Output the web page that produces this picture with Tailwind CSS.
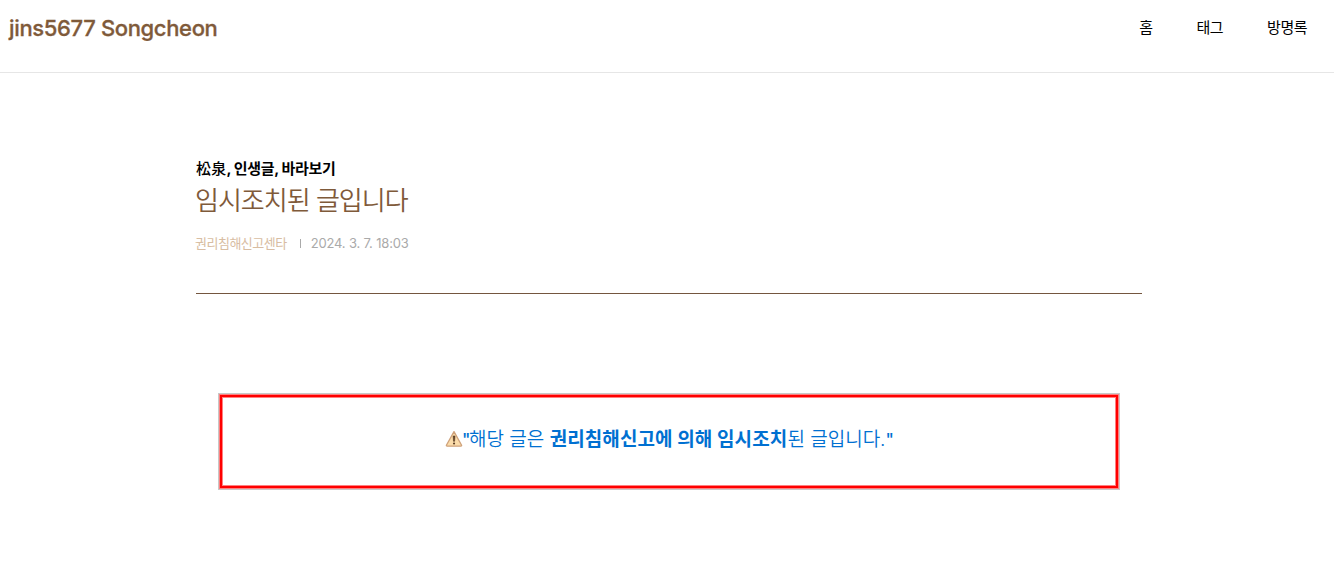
<!DOCTYPE html>
<html lang="ko">
<head>
    <meta charset="UTF-8">
    <title>jins5677 Songcheon</title>
    <script src="https://cdn.jsdelivr.net/npm/@tailwindcss/browser@4"></script>
</head>
<body class="min-h-screen bg-white font-[Inter,'Noto_Sans_CJK_KR',sans-serif] overflow-hidden">

<!-- Header -->
<header class="h-[73px] border-b border-[#e6e6e6] flex items-start justify-between pl-[9px] pr-[27px]">
    <h1 class="mt-3 text-[22px] leading-8 font-medium tracking-[-0.35px] text-[#7f5a3a] [-webkit-text-stroke:0.3px_#7f5a3a] whitespace-nowrap"><a href="#" id="logo">jins5677 Songcheon</a></h1>
    <nav class="mt-[18px] flex gap-11 text-[15px] leading-5 tracking-[-0.5px] text-black whitespace-nowrap">
        <a href="#">홈</a>
        <a href="#">태그</a>
        <a href="#">방명록</a>
    </nav>
</header>

<main class="w-[946px] ml-[196px] pt-[86px]">
    <!-- Post heading -->
    <div class="h-[135px] border-b border-[#74563f] whitespace-nowrap">
        <p class="text-[15px] leading-5 font-bold tracking-[-0.35px] text-black"><a href="#"><span class="font-medium tracking-[0.2px]">松泉</span>, 인생글, 바라보기</a></p>
        <h2 class="mt-1 -ml-px text-[26px] leading-9 font-[350] tracking-[-1px] text-[#7f5a3a]">임시조치된 글입니다</h2>
        <div class="mt-[14px] -ml-px flex items-center text-[13px] leading-5">
            <span class="tracking-[-0.5px] text-[#d8bda2]">권리침해신고센타</span>
            <span class="ml-[13px] mr-[10px] w-px h-[9px] bg-[#aaa]"></span>
            <span class="tracking-[-0.17px] text-[#aaa]">2024. 3. 7. 18:03</span>
        </div>
    </div>

    <!-- Notice -->
    <div class="mt-[99px] ml-[22px] w-[902px] h-[97px] border border-[#c8c8c8]">
        <div class="h-full border border-[#ff8080]">
            <div class="h-full border-2 border-[#ff0000]">
                <div class="h-full border border-[#ff8080] flex items-start justify-center pt-[26px] text-[19px] leading-8 text-[#0070d1] whitespace-nowrap">
                    <svg class="w-[18px] h-[18px] mt-[6px] -mr-px shrink-0" viewBox="0 0 18 18">
                        <path d="M9 1.6 L16.6 15.2 Q16.8 16.2 15.8 16.2 H2.2 Q1.2 16.2 1.4 15.2 Z" fill="#fbdcaa" stroke="#cfa27b" stroke-width="1.3" stroke-linejoin="round"/>
                        <path d="M8.1 6h1.9l-.4 5.3H8.5z" fill="#5b3d24" stroke="#5b3d24" stroke-width=".6"/>
                        <circle cx="9.05" cy="13.5" r="1.1" fill="#5b3d24"/>
                    </svg>
                    <p class="font-[350]"><span class="text-[17px] font-medium tracking-[-1.5px]">"</span>해당 글은 <b class="font-bold tracking-[0.1px]">권리침해신고에 의해 임시조치</b>된 글입니다.<span class="text-[17px] font-medium tracking-[-1px]">"</span></p>
                </div>
            </div>
        </div>
    </div>
</main>

</body>
</html>
